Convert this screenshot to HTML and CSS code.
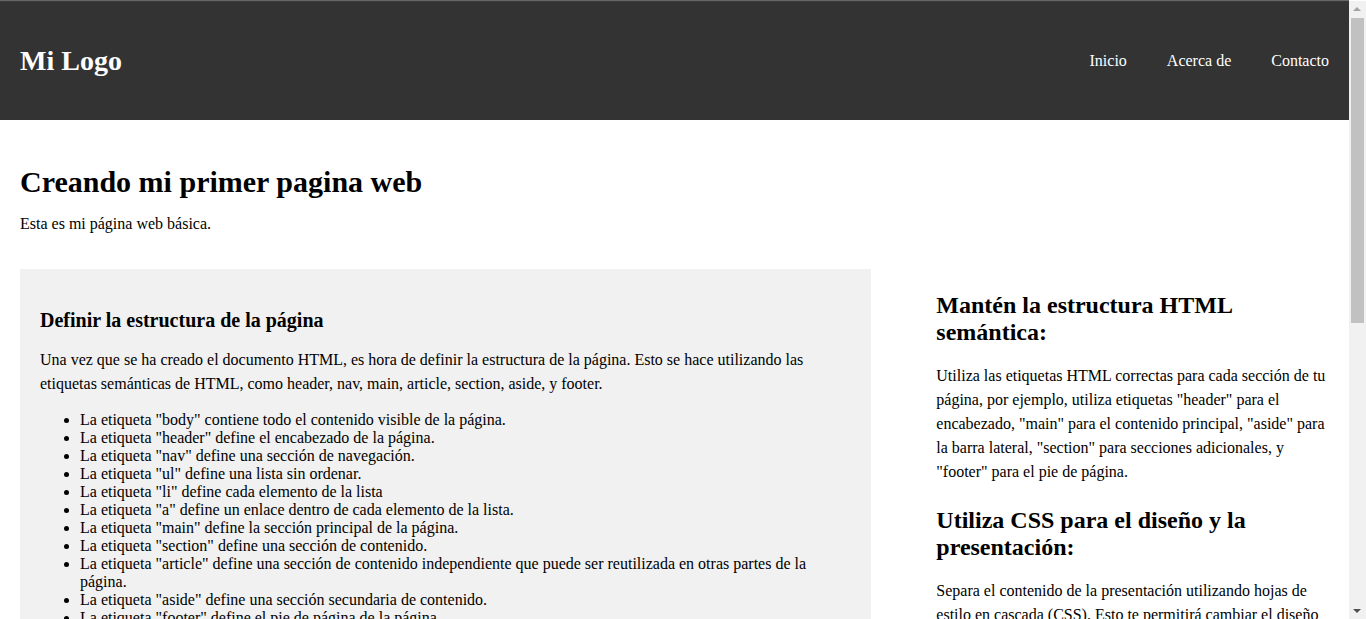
FILE: index.html
```html
<!DOCTYPE html>
<html lang="es">
<head>
<meta charset="utf-8">
<title>Mi primera página web</title>
<link rel="stylesheet" href="styles.css">
</head>
<body>
<header class="site-header">
  <h1 class="logo">Mi Logo</h1>
  <nav>
    <ul class="nav-list">
      <li><a href="#">Inicio</a></li>
      <li><a href="#">Acerca de</a></li>
      <li><a href="#">Contacto</a></li>
    </ul>
  </nav>
</header>
<main class="main">
  <h1 class="page-title">Creando mi primer pagina web</h1>
  <p class="intro">Esta es mi página web básica.</p>
  <div class="content">
    <section class="panel">
      <h3 class="panel-title">Definir la estructura de la página</h3>
      <p class="text panel-text">Una vez que se ha creado el documento HTML, es hora de definir la estructura de la página. Esto se hace utilizando las etiquetas semánticas de HTML, como header, nav, main, article, section, aside, y footer.</p>
      <ul class="tag-list">
        <li>La etiqueta "body" contiene todo el contenido visible de la página.</li>
        <li>La etiqueta "header" define el encabezado de la página.</li>
        <li>La etiqueta "nav" define una sección de navegación.</li>
        <li>La etiqueta "ul" define una lista sin ordenar.</li>
        <li>La etiqueta "li" define cada elemento de la lista</li>
        <li>La etiqueta "a" define un enlace dentro de cada elemento de la lista.</li>
        <li>La etiqueta "main" define la sección principal de la página.</li>
        <li>La etiqueta "section" define una sección de contenido.</li>
        <li>La etiqueta "article" define una sección de contenido independiente que puede ser reutilizada en otras partes de la página.</li>
        <li>La etiqueta "aside" define una sección secundaria de contenido.</li>
        <li>La etiqueta "footer" define el pie de página de la página.</li>
      </ul>
    </section>
    <aside class="sidebar">
      <h2 class="side-title">Mantén la estructura HTML semántica:</h2>
      <p class="text">Utiliza las etiquetas HTML correctas para cada sección de tu página, por ejemplo, utiliza etiquetas "header" para el encabezado, "main" para el contenido principal, "aside" para la barra lateral, "section" para secciones adicionales, y "footer" para el pie de página.</p>
      <h2 class="side-title">Utiliza CSS para el diseño y la presentación:</h2>
      <p class="text">Separa el contenido de la presentación utilizando hojas de estilo en cascada (CSS). Esto te permitirá cambiar el diseño de tu página sin tener que modificar el contenido HTML.</p>
    </aside>
  </div>
</main>
<div class="scrollbar" aria-hidden="true">
  <span class="sb-arrow sb-up"></span>
  <span class="sb-thumb"></span>
  <span class="sb-arrow sb-down"></span>
</div>
</body>
</html>
```

FILE: styles.css
```css
html, body {
  margin: 0;
  padding: 0;
}

body {
  font-family: "Liberation Serif", "Times New Roman", serif;
  font-size: 16px;
  color: #000;
  background: #fff;
  border-top: 1px solid #666;
  margin-right: 17px;
}

.site-header {
  background: #333;
  color: #fff;
  display: flex;
  justify-content: space-between;
  align-items: center;
  padding: 44px 20px;
  border-top: 1px solid #3a3a3a;
}

.logo {
  margin: 0;
  font-size: 28px;
  line-height: 30px;
  font-weight: bold;
}

.nav-list {
  list-style: none;
  margin: 0;
  padding: 0;
  display: flex;
  gap: 40px;
}

.nav-list a {
  color: #fff;
  text-decoration: none;
}

.main {
  padding: 20px;
}

.page-title {
  font-size: 30px;
  margin: 25px 0 13px;
}

.intro {
  margin: 0;
  line-height: 24px;
}

.content {
  display: flex;
  justify-content: space-between;
  align-items: flex-start;
  margin-top: 33px;
}

.panel {
  width: 65%;
  box-sizing: border-box;
  background: #f1f1f1;
  padding: 20px;
}

.panel-title {
  font-size: 20px;
  margin: 20px 0 16px;
}

.text {
  line-height: 24px;
  margin: 15px 0 16px;
}

.panel-text {
  margin: 16px 0 15px;
}

.tag-list {
  margin: 15px 0;
  padding-left: 40px;
}

.sidebar {
  width: 30%;
}

.side-title {
  font-size: 24px;
  margin: 23px 0 18px;
}

/* simulated browser scrollbar */
.scrollbar {
  position: fixed;
  top: 1px;
  right: 0;
  bottom: 0;
  width: 17px;
  background: #f1f1f1;
}

.sb-thumb {
  position: absolute;
  left: 2px;
  right: 2px;
  top: 17px;
  height: 305px;
  background: #c1c1c1;
}

.sb-arrow {
  position: absolute;
  left: 4px;
  width: 0;
  height: 0;
  border-left: 4px solid transparent;
  border-right: 4px solid transparent;
}

.sb-up {
  top: 6px;
  border-bottom: 4px solid #a3a3a3;
}

.sb-down {
  bottom: 6px;
  border-top: 4px solid #505050;
}
```
